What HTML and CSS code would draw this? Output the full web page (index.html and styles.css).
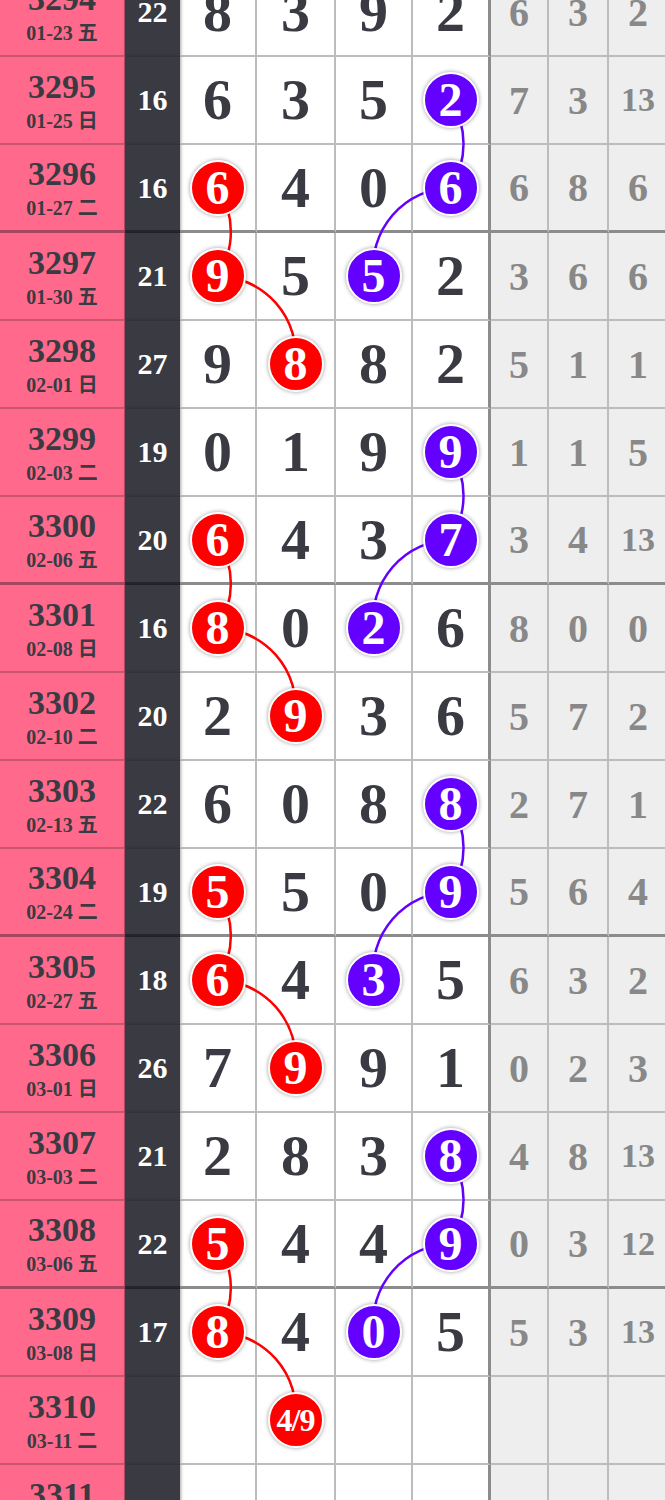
FILE: index.html
```html
<!DOCTYPE html>
<html>
<head>
	<meta charset="utf-8">
	<title>走势图</title>
<link rel="stylesheet" href="styles.css">
</head>

<body>

<div id="board">
<svg id="links"></svg>
<div id="rows"></div>
</div>

<script type="text/javascript">
$=function(x){return document.getElementById(x);};

// issue, date, sum, 4 positions (r/p = red / purple ball), 3 gaps
var data = [
	["3294", "01-23 五", "22", ["8", "3", "9", "2"], ["6", "3", "2"]],
	["3295", "01-25 日", "16", ["6", "3", "5", "p2"], ["7", "3", "13"]],
	["3296", "01-27 二", "16", ["r6", "4", "0", "p6"], ["6", "8", "6"]],
	["3297", "01-30 五", "21", ["r9", "5", "p5", "2"], ["3", "6", "6"]],
	["3298", "02-01 日", "27", ["9", "r8", "8", "2"], ["5", "1", "1"]],
	["3299", "02-03 二", "19", ["0", "1", "9", "p9"], ["1", "1", "5"]],
	["3300", "02-06 五", "20", ["r6", "4", "3", "p7"], ["3", "4", "13"]],
	["3301", "02-08 日", "16", ["r8", "0", "p2", "6"], ["8", "0", "0"]],
	["3302", "02-10 二", "20", ["2", "r9", "3", "6"], ["5", "7", "2"]],
	["3303", "02-13 五", "22", ["6", "0", "8", "p8"], ["2", "7", "1"]],
	["3304", "02-24 二", "19", ["r5", "5", "0", "p9"], ["5", "6", "4"]],
	["3305", "02-27 五", "18", ["r6", "4", "p3", "5"], ["6", "3", "2"]],
	["3306", "03-01 日", "26", ["7", "r9", "9", "1"], ["0", "2", "3"]],
	["3307", "03-03 二", "21", ["2", "8", "3", "p8"], ["4", "8", "13"]],
	["3308", "03-06 五", "22", ["r5", "4", "4", "p9"], ["0", "3", "12"]],
	["3309", "03-08 日", "17", ["r8", "4", "p0", "5"], ["5", "3", "13"]],
	["3310", "03-11 二", "", ["", "r4/9", "", ""], ["", "", ""]],
	["3311", "03-13 五", "", ["", "", "", ""], ["", "", ""]]
];

var balls = {r: [], p: []};

data.forEach(function(r, i) {
	var row = document.createElement("div");
	row.className = "row" + ((+r[0] - 3296) % 4 == 0 ? " row_end" : "");

	var html = '<div class="c_issue"><div class="txt_num">' + r[0] + '</div>'
	         + '<div class="txt_date">' + r[1] + '</div></div>'
	         + '<div class="c_sum">' + r[2] + '</div>';

	r[3].forEach(function(x) {
		var c = x.charAt(0);
		if (c == "r" || c == "p") {
			var t = x.substr(1);
			html += '<div class="c_pos"><span class="ball ball_' + c
			      + (t.length > 1 ? ' ball_small' : '') + '">' + t + '</span></div>';
		} else {
			html += '<div class="c_pos">' + x + '</div>';
		}
	});
	r[4].forEach(function(x, k) {
		html += '<div class="c_gap' + (k == 0 ? ' c_gap0' : '') + (x.length > 1 ? ' txt_small' : '') + '">' + x + '</div>';
	});

	row.innerHTML = html;
	$("rows").appendChild(row);

	row.querySelectorAll(".ball").forEach(function(b) {
		balls[b.classList.contains("ball_r") ? "r" : "p"].push({el: b, row: i});
	});
});

// connect balls of one colour in neighbouring rows
var board = $("board");
var br = board.getBoundingClientRect();
var svg = $("links");
svg.setAttribute("width", br.width);
svg.setAttribute("height", br.height);

function center(el) {
	var r = el.getBoundingClientRect();
	return [r.left - br.left + r.width/2, r.top - br.top + r.height/2];
}

var colors = {r: "#ff0000", p: "#6400ff"};
var paths = "";
["r", "p"].forEach(function(k) {
	var list = balls[k];
	for (var i = 1; i < list.length; i++) {
		if (list[i].row - list[i-1].row != 1) continue;
		var a = center(list[i-1].el);
		var b = center(list[i].el);
		var sweep = b[0] >= a[0] ? 1 : 0;
		paths += '<path d="M' + a[0] + ' ' + a[1] + ' A80 80 0 0 ' + sweep + ' ' + b[0] + ' ' + b[1]
		       + '" stroke="' + colors[k] + '" />';
	}
});
svg.innerHTML = paths;
</script>
</body>

</html>
```

FILE: styles.css
```css
body {
	margin: 0;
	overflow: hidden;
	background-color: #fff;

	font-family: "Liberation Serif", "Noto Sans CJK SC", serif;
	font-weight: bold;
	color: #3a3a42;
}

#board {
	position: relative;
	width: 669px;
	margin-top: -31px;
}

#links {
	position: absolute;
	left: 0;
	top: 0;
	z-index: 1;
	fill: none;
	stroke-width: 2.5px;
}

.row {
	display: grid;
	grid-template-columns: 125px 55px 77px 79px 77px 78px 58px 60px 60px;
	height: 88px;
}

.row > div {
	box-sizing: border-box;
	display: flex;
	align-items: center;
	justify-content: center;

	border-bottom: 2px solid #bcbcbc;
}

.row_end > div {
	border-bottom: 3px solid #8c8c8c;
}

.c_issue {
	flex-direction: column;
	padding-top: 2px;
	background-color: #ff6a8c;
	border-right: 1px solid #b9506b;
}
.row .c_issue {
	border-bottom-color: #c9566f;
}
.row_end .c_issue {
	border-bottom-color: #a84660;
}

.txt_num {
	font-size: 34px;
	line-height: 34px;
}

.txt_date {
	margin-top: 5px;
	font-size: 20px;
	line-height: 24px;
}

.c_sum {
	background-color: #3a3a42;
	color: #fff;
	font-size: 30px;
	box-shadow: 1px 0 3px rgba(0, 0, 0, 0.35);
}
.row .c_sum {
	border-bottom-color: #3a3a42;
}
.row_end .c_sum {
	border-bottom-color: #26262c;
}

.c_pos {
	border-right: 2px solid #bcbcbc;
	font-size: 58px;
	line-height: 58px;
}

.c_pos:nth-child(6) {
	border-right: 3px solid #8c8c8c;
}

.c_gap {
	background-color: #eeeeee;
	border-right: 2px solid #bcbcbc;
	color: #888;
	font-size: 40px;
}

.txt_small {
	font-size: 34px;
}

.ball {
	position: relative;
	z-index: 2;
	display: flex;
	align-items: center;
	justify-content: center;

	width: 52px;
	height: 52px;
	border: 2px solid #fff;
	border-radius: 50%;
	box-shadow: 0 0 4px rgba(0, 0, 0, 0.4);

	color: #fff;
	font-size: 48px;
	line-height: 52px;
}

.ball_r {
	background-color: #ff0000;
}

.ball_p {
	background-color: #6400ff;
}

.ball_small {
	font-size: 32px;
	letter-spacing: -1px;
}
```
